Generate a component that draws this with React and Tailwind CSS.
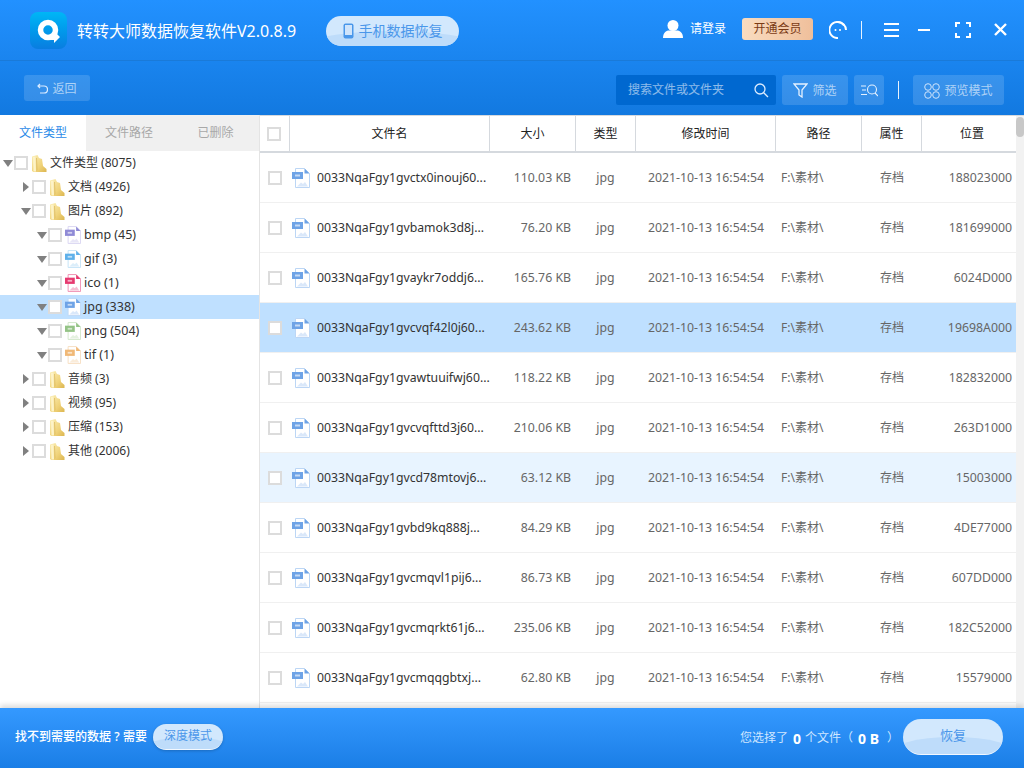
import React from "react";

const FONT = "[font-family:'Noto_Sans','Noto_Sans_CJK_SC',sans-serif]";

const rows = [
  ["0033NqaFgy1gvctx0inouj60...", "110.03 KB", "188023000", ""],
  ["0033NqaFgy1gvbamok3d8j...", "76.20 KB", "181699000", ""],
  ["0033NqaFgy1gvaykr7oddj6...", "165.76 KB", "6024D000", ""],
  ["0033NqaFgy1gvcvqf42l0j60...", "243.62 KB", "19698A000", "bg-[#bfe0ff]"],
  ["0033NqaFgy1gvawtuuifwj60...", "118.22 KB", "182832000", ""],
  ["0033NqaFgy1gvcvqfttd3j60...", "210.06 KB", "263D1000", ""],
  ["0033NqaFgy1gvcd78mtovj6...", "63.12 KB", "15003000", "bg-[#e8f4ff]"],
  ["0033NqaFgy1gvbd9kq888j...", "84.29 KB", "4DE77000", ""],
  ["0033NqaFgy1gvcmqvl1pij6...", "86.73 KB", "607DD000", ""],
  ["0033NqaFgy1gvcmqrkt61j6...", "235.06 KB", "182C52000", ""],
  ["0033NqaFgy1gvcmqqgbtxj...", "62.80 KB", "15579000", ""],
];

const GRID = "grid grid-cols-[30px_200px_86px_60px_140px_86px_60px_94px]";

function Logo() {
  return (
    <div className="w-[37px] h-[37px] rounded-[8px] bg-gradient-to-b from-[#00b6f6] to-[#0a7de0] flex items-center justify-center shrink-0">
      <svg width="24" height="24" viewBox="0 0 24 24">
        <circle cx="11" cy="11" r="7.500" fill="none" stroke="#fff" strokeWidth="5.500" />
        <path d="M12 16 L17 16 L17 12 L23 18 L17 24 L17 21 L12 21 Z" fill="#fff" />
      </svg>
    </div>
  );
}

function Folder() {
  return (
    <svg width="16" height="17" viewBox="0 0 16 17" className="shrink-0">
      <defs>
        <linearGradient id="fg" x1="0" y1="0" x2="1" y2="1">
          <stop offset="0" stopColor="#fbeeb6" />
          <stop offset="0.6" stopColor="#f0d37a" />
          <stop offset="1" stopColor="#dcb650" />
        </linearGradient>
      </defs>
      <path d="M1 1.500 L6.500 0 L8 3 L11 4 L12 11 L15.500 14 L15.500 17 L2.500 17 L1 16 Z" fill="url(#fg)" />
      <path d="M2 2 L4.500 1.500 L5 16.500 L2.500 16.500 Z" fill="#fdf3c8" />
      <path d="M6 3 L6.500 15 L5.500 16.500 L5 3 Z" fill="#d8b65c" opacity="0.7" />
    </svg>
  );
}

function FileIcon({ color = "#6ea3e6", light = "#bcd6f5", size = 18 }) {
  return (
    <svg width={size} height={size + 2} viewBox="0 0 18 20" className="shrink-0">
      <path d="M3.500 0.500 H12.500 L17.500 5.500 V19.500 H3.500 Z" fill="#fff" stroke={light} />
      <path d="M12.500 0.500 V5.500 H17.500 Z" fill={color} />
      <rect x="0" y="4" width="11" height="7" fill={color} />
      <rect x="3" y="6.500" width="5" height="2" fill="#fff" opacity="0.6" />
      <path d="M5 18.500 L9 14.500 L11 16 L13 14 L16 18.500 Z" fill={light} opacity="0.55" />
    </svg>
  );
}

function Box({ className = "" }) {
  return <span className={`block w-[14px] h-[14px] border-2 border-[#dcdcdc] bg-white shrink-0 ${className}`} />;
}

function Arrow({ open }) {
  return open ? (
    <svg width="10" height="7" viewBox="0 0 10 7" className="shrink-0"><path d="M0 0 H10 L5 7 Z" fill="#808080" /></svg>
  ) : (
    <svg width="10" height="10" viewBox="0 0 10 10" className="shrink-0"><path d="M2 0 L8 5 L2 10 Z" fill="#808080" /></svg>
  );
}

function TreeRow({ pad, open, icon, label, selected, file }) {
  return (
    <div className={`h-6 flex items-center ${pad} ${selected ? "bg-[#bfe0ff]" : ""}`}>
      <span className="w-[10px] flex justify-center"><Arrow open={open} /></span>
      <Box className={`ml-[1px] ${selected ? "bg-transparent border-[#c9d3dc]" : ""}`} />
      <span className="ml-[3px] w-[16px] flex justify-center">{icon}</span>
      <span className={`ml-[3px] text-[#333] whitespace-pre ${file ? "text-[12.5px]" : "text-[12px]"}`}>{label}</span>
    </div>
  );
}

function Pale({ className = "", children }) {
  return <div className={`bg-white/[0.14] rounded-[3px] flex items-center justify-center pt-[1px] text-[12px] text-white/60 ${className}`}>{children}</div>;
}

function Gloss({ className = "", children }) {
  return (
    <div className={`relative overflow-hidden shrink-0 flex items-center justify-center bg-[#d2e8fd] rounded-full ${className}`}>
      <span className="absolute left-[-15%] right-[-15%] top-[52%] h-full rounded-[50%] bg-[#bedcfa]" />
      <span className="relative flex items-center gap-[5px] text-[#4a97ea]">{children}</span>
    </div>
  );
}

export default function App() {
  return (
    <div className={`w-[1024px] h-[768px] overflow-hidden flex flex-col bg-white ${FONT}`}>
      <header className="h-[115px] shrink-0 bg-gradient-to-b from-[#2291ff] to-[#1279e0] flex flex-col">
        <div className="h-[61px] shrink-0 border-b border-[#1a7ad8] flex items-center text-white pl-[30px] pr-[18px] pt-[1px]">
          <Logo />
          <span className="ml-[10px] text-[16px] whitespace-nowrap">转转大师数据恢复软件V2.0.8.9</span>
          <Gloss className="ml-[30px] w-[133px] h-[30px] text-[14px]">
            <svg width="11" height="16" viewBox="0 0 11 16"><rect x="0.500" y="0.500" width="10" height="15" rx="2" fill="#4a97ea" /><rect x="2" y="2" width="7" height="10" fill="#cfe4fb" /></svg>
            手机数据恢复
          </Gloss>
          <div className="flex items-center mb-[3px]">
            <svg width="20" height="18" viewBox="0 0 20 18" className="ml-[204px] shrink-0"><circle cx="10" cy="5.500" r="5.500" fill="#fff" /><path d="M0 18 C0 12 4 10.500 6 10.500 L14 10.500 C16 10.500 20 12 20 18 Z" fill="#fff" /></svg>
            <span className="ml-[7px] text-[12px] whitespace-nowrap">请登录</span>
            <div className="ml-[16px] w-[71px] h-[22px] rounded-[3px] bg-gradient-to-r from-[#f9dcc0] to-[#efbf9b] text-[#7a3a14] text-[12px] flex items-center justify-center">开通会员</div>
          </div>
          <div className="flex items-center mb-[2px]">
            <svg width="18" height="18" viewBox="0 0 18 18" className="ml-[16px] shrink-0" fill="none" stroke="#fff" strokeWidth="2"><path d="M15 4.500 A8 8 0 1 0 9 17" /><path d="M9 1 A8 8 0 0 1 17 9" /><circle cx="6.500" cy="9" r="1" fill="#fff" stroke="none" /><circle cx="11" cy="9" r="1" fill="#fff" stroke="none" /></svg>
            <span className="ml-[14px] w-px h-[18px] bg-white/90" />
            <svg width="15" height="14" viewBox="0 0 15 14" className="ml-[22px] shrink-0" fill="#fff"><rect width="15" height="2" /><rect y="6" width="15" height="2" /><rect y="12" width="15" height="2" /></svg>
            <span className="ml-[19px] w-[12px] h-[2px] bg-white" />
            <svg width="16" height="16" viewBox="0 0 16 16" className="ml-[25px] shrink-0" fill="none" stroke="#fff" strokeWidth="2"><path d="M1 5 V1 H5 M11 1 H15 V5 M15 11 V15 H11 M5 15 H1 V11" /></svg>
            <svg width="13" height="13" viewBox="0 0 13 13" className="ml-[23px] shrink-0" fill="none" stroke="#fff" strokeWidth="2.400"><path d="M1 1 L12 12 M12 1 L1 12" /></svg>
          </div>
        </div>
        <div className="flex-1 flex items-start pt-[14px] pl-[24px] pr-[20px]">
          <Pale className="w-[66px] h-[26px] gap-[4px]">
            <svg width="11" height="11" viewBox="0 0 11 11" fill="none" stroke="#dcecff" strokeWidth="1.200"><path d="M3 1 L1 3 L3 5 M1 3 H7 A3 3 0 0 1 7 10 H3" /></svg>
            返回
          </Pale>
          <div className="ml-[526px] w-[160px] h-[30px] bg-[#0068d0] rounded-[2px] flex items-center justify-between pl-[12px] pr-[7px] text-[12px] text-white/55">
            搜索文件或文件夹
            <svg width="15" height="15" viewBox="0 0 15 15" fill="none" stroke="#dcecff" strokeWidth="1.300"><circle cx="6" cy="6" r="5" /><path d="M9.700 9.700 L14 14" /></svg>
          </div>
          <Pale className="ml-[6px] w-[66px] h-[30px] gap-[4px]">
            <svg width="15" height="15" viewBox="0 0 15 15" fill="none" stroke="#e5f1ff" strokeWidth="1.300"><path d="M1 1 H14 L9 7 V14 L6 12 V7 Z" /></svg>
            筛选
          </Pale>
          <Pale className="ml-[6px] w-[30px] h-[30px]">
            <svg width="17" height="13" viewBox="0 0 17 13" fill="none" stroke="#e5f1ff" strokeWidth="1.100"><path d="M0 2 H5 M1 6 H5 M0 10.500 H6" /><circle cx="11" cy="5.500" r="4.500" /><path d="M14 9 L17 12" /></svg>
          </Pale>
          <span className="ml-[14px] mt-[6px] w-px h-[18px] bg-white/90" />
          <Pale className="ml-[14px] w-[91px] h-[30px] gap-[4px]">
            <svg width="16" height="16" viewBox="0 0 16 16" fill="none" stroke="#cfe4fb" strokeWidth="1"><circle cx="4" cy="4" r="3.300" /><circle cx="12" cy="4" r="3.300" /><circle cx="4" cy="12" r="3.300" /><circle cx="12" cy="12" r="3.300" /></svg>
            预览模式
          </Pale>
        </div>
      </header>

      <main className="flex-1 flex min-h-0">
        <aside className="w-[260px] shrink-0 border-r border-[#e4e4e4] flex flex-col">
          <div className="h-[36px] grid grid-cols-[86px_86px_87px] text-[12px] text-[#a8a8a8] text-center leading-[36px]">
            <div className="text-[#2a8ae8] bg-white">文件类型</div>
            <div className="bg-[#f0f0f0]">文件路径</div>
            <div className="bg-[#f0f0f0]">已删除</div>
          </div>
          <TreeRow pad="pl-[3px]" open icon={<Folder />} label="文件类型 (8075)" />
          <TreeRow pad="pl-[21px]" icon={<Folder />} label="文档 (4926)" />
          <TreeRow pad="pl-[21px]" open icon={<Folder />} label="图片 (892)" />
          <TreeRow file pad="pl-[37px]" open icon={<FileIcon size={16} color="#8f8ad6" light="#d6d2f0" />} label="bmp (45)" />
          <TreeRow file pad="pl-[37px]" open icon={<FileIcon size={16} color="#5eb0ea" light="#bfe0f6" />} label="gif (3)" />
          <TreeRow file pad="pl-[37px]" open icon={<FileIcon size={16} color="#e6396f" light="#ee86ac" />} label="ico (1)" />
          <TreeRow file pad="pl-[37px]" open selected icon={<FileIcon size={16} />} label="jpg (338)" />
          <TreeRow file pad="pl-[37px]" open icon={<FileIcon size={16} color="#94c386" light="#cfe5c7" />} label="png (504)" />
          <TreeRow file pad="pl-[37px]" open icon={<FileIcon size={16} color="#f0b876" light="#f6dcbc" />} label="tif (1)" />
          <TreeRow pad="pl-[21px]" icon={<Folder />} label="音频 (3)" />
          <TreeRow pad="pl-[21px]" icon={<Folder />} label="视频 (95)" />
          <TreeRow pad="pl-[21px]" icon={<Folder />} label="压缩 (153)" />
          <TreeRow pad="pl-[21px]" icon={<Folder />} label="其他 (2006)" />
        </aside>

        <section className="flex-1 min-w-0 flex">
          <div className="w-[756px] shrink-0 flex flex-col overflow-hidden">
            <div className={`${GRID} h-[38px] shrink-0 border-b-2 border-t border-[#d5d9de] text-[12px] text-[#222] text-center items-stretch`}>
              <div className="border-r border-[#d5d9de] flex items-center justify-center pr-[1px]"><Box /></div>
              {["文件名", "大小", "类型", "修改时间", "路径", "属性", "位置"].map((t, i) => (
                <div key={t} className={`flex items-center justify-center ${i < 6 ? "border-r border-[#d5d9de]" : "pl-[6px]"}`}>{t}</div>
              ))}
            </div>
            {rows.map((r) => (
              <div key={r[0]} className={`${GRID} h-[50px] shrink-0 border-b border-[#f0f0f0] items-center text-[12px] text-[#666] text-center ${r[3]}`}>
                <div className="flex justify-center"><Box className={r[3] ? "bg-transparent" : ""} /></div>
                <div className="flex items-center pl-[2px] gap-[7px] text-left">
                  <FileIcon />
                  <span className="text-[12.25px] text-[#333] whitespace-nowrap pt-[1px]">{r[0]}</span>
                </div>
                <div className="text-right pr-[5px] text-[12.3px] pt-[1px]">{r[1]}</div>
                <div className="text-[12.3px] pt-[1px] pr-[1px]">jpg</div>
                <div className="text-[12.3px] pt-[1px]">2021-10-13 16:54:54</div>
                <div className="text-left pl-[5px]">F:\素材\</div>
                <div>存档</div>
                <div className="text-right pr-[4px] text-[12.3px] pt-[1px]">{r[2]}</div>
              </div>
            ))}
          </div>
          <div className="flex-1 bg-[#f2f2f2] pt-[1px] border-t border-[#d5d9de]">
            <div className="h-[20px] bg-[#c8c8c8] rounded-[4px]" />
          </div>
        </section>
      </main>

      <footer className="h-[60px] shrink-0 bg-gradient-to-b from-[#3499ff] to-[#1a7ee6] flex items-center pl-[15px] pr-[21px] text-white text-[12px] shadow-[0_-3px_5px_rgba(0,0,0,0.14)] relative">
        <span className="font-medium whitespace-nowrap mb-[3px]">找不到需要的数据<span className="inline-block w-[12px] text-center">?</span>需要</span>
        <Gloss className="ml-[6px] w-[70px] h-[26px] mb-[3px] text-[12px] shadow-[0_1px_3px_rgba(0,0,0,0.2)] border-b border-white/70">深度模式</Gloss>
        <div className="ml-auto flex items-center text-[#cfe6ff] whitespace-pre">
          <span>您选择了</span>
          <b className="ml-[5px] text-white text-[14px] font-bold">0</b>
          <span className="ml-[4px]">个文件（</span>
          <b className="ml-[5px] text-white text-[14px] font-bold">0 B</b>
          <span className="ml-[8px]">）</span>
        </div>
        <Gloss className="ml-[4px] w-[100px] h-[36px] mb-[3px] text-[13px] border-b border-white/70">恢复</Gloss>
      </footer>
    </div>
  );
}
